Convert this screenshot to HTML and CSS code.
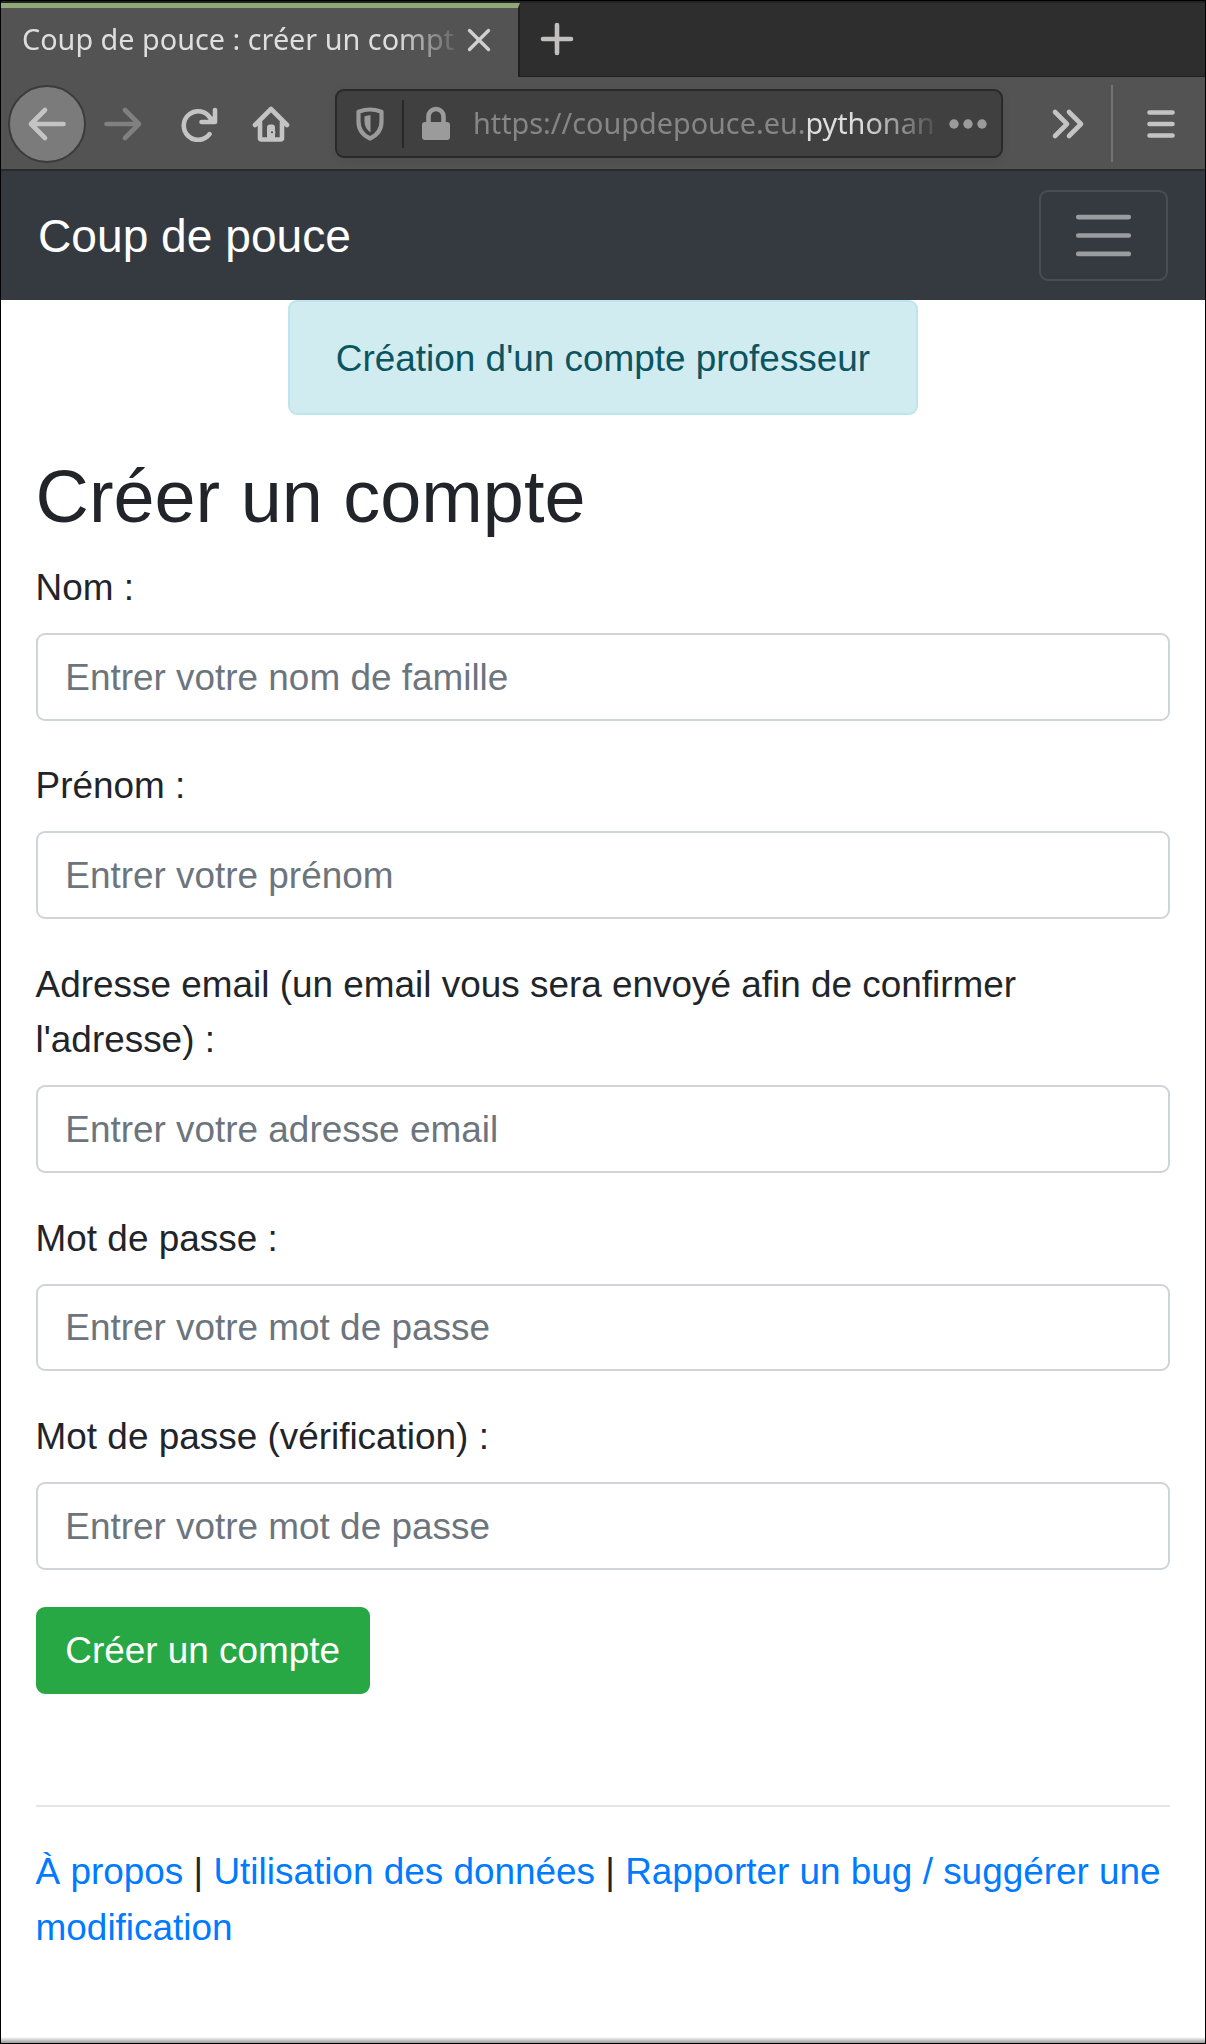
FILE: index.html
```html
<!DOCTYPE html>
<html lang="fr">
<head>
<meta charset="utf-8">
<title>Coup de pouce : créer un compte</title>
<link rel="stylesheet" href="styles.css">
</head>
<body>
<div class="window">
  <header class="browser">
    <div class="tabs">
      <div class="tab">
        <span class="tab-title">Coup de pouce : créer un compt</span>
        <svg class="tab-close" width="24" height="24" viewBox="0 0 24 24"><path d="M2.500 2.500l19 19M21.500 2.500l-19 19"/></svg>
      </div>
      <svg class="tab-add" width="34" height="34" viewBox="0 0 34 34"><path d="M17 3v28M3 17h28"/></svg>
    </div>
    <div class="toolbar">
      <div class="back"><svg width="40" height="36" viewBox="0 0 40 36"><path d="M36.500 18H4M18 4L4 18l14 14"/></svg></div>
      <svg class="icon forward" width="40" height="36" viewBox="0 0 40 36"><path d="M3.500 18H36M22 4l14 14-14 14"/></svg>
      <svg class="icon reload" width="38" height="36" viewBox="0 0 38 36"><path d="M29.500 28.200A14.300 14.300 0 1 1 30.500 12.500"/><path d="M35 4v12H21.500"/><path class="fill" d="M27 16l8-8v8z"/></svg>
      <svg class="icon home" width="38" height="38" viewBox="0 0 38 38"><path d="M3 20L19 4l16 16M8 17v16q0 1.500 1.500 1.500h19q1.500 0 1.500-1.500V17"/><path class="fill" d="M15 34V22.500q0-3 3-3h2q3 0 3 3V34z"/><circle cx="20" cy="27.300" r="1.100" fill="#444"/></svg>
      <div class="address">
        <svg class="shield" width="30" height="36" viewBox="0 0 30 36"><path d="M15 3.500C11.500 3.500 7 4.500 3.500 5.700v9.800c0 9 5 14 11.500 17 6.500-3 11.500-8 11.500-17V5.700C23 4.500 18.500 3.500 15 3.500z"/><path class="fill" d="M15.500 9v17.500C11.500 24 9.500 20 9.500 15.500v-5.300z"/></svg>
        <span class="divider"></span>
        <svg class="lock" width="30" height="36" viewBox="0 0 30 36"><path d="M7.500 17v-6.500a7.500 7.500 0 0 1 15 0V17"/><rect x="1" y="16" width="28" height="18" rx="3"/></svg>
        <span class="url">https://coupdepouce.eu.<b>pythonan</b></span>
        <svg class="dots" width="38" height="10" viewBox="0 0 38 10"><circle cx="5" cy="5" r="4.700"/><circle cx="19" cy="5" r="4.700"/><circle cx="33" cy="5" r="4.700"/></svg>
      </div>
      <svg class="icon more" width="34" height="32" viewBox="0 0 34 32"><path d="M4 4l12 12L4 28M18 4l12 12-12 12"/></svg>
      <span class="separator"></span>
      <svg class="icon menu" width="30" height="30" viewBox="0 0 30 30"><path d="M3.500 3.500h23M3.500 15h23M3.500 26.500h23"/></svg>
    </div>
  </header>
  <nav class="navbar">
    <a class="brand">Coup de pouce</a>
    <button class="toggler" type="button"><svg viewBox="0 0 30 30"><path d="M4 7h22M4 15h22M4 23h22"/></svg></button>
  </nav>
  <main class="container">
    <div class="alert">Création d'un compte professeur</div>
    <h1>Créer un compte</h1>
    <form>
      <div class="group"><label for="nom">Nom :</label><input id="nom" type="text" placeholder="Entrer votre nom de famille"></div>
      <div class="group"><label for="prenom">Prénom :</label><input id="prenom" type="text" placeholder="Entrer votre prénom"></div>
      <div class="group"><label for="email">Adresse email (un email vous sera envoyé afin de confirmer l'adresse) :</label><input id="email" type="email" placeholder="Entrer votre adresse email"></div>
      <div class="group"><label for="mdp">Mot de passe :</label><input id="mdp" type="password" placeholder="Entrer votre mot de passe"></div>
      <div class="group"><label for="mdp2">Mot de passe (vérification) :</label><input id="mdp2" type="password" placeholder="Entrer votre mot de passe"></div>
      <button class="submit" type="button">Créer un compte</button>
    </form>
    <footer><a>À propos</a> | <a>Utilisation des données</a> | <a>Rapporter un bug / suggérer une modification</a></footer>
  </main>
</div>
</body>
</html>
```
FILE: styles.css
```css
* { box-sizing: border-box; }
html { font-size: 36.923px; }
body { margin: 0; font-family: "Liberation Sans", Arial, sans-serif; line-height: 1.5; color: #212529; background: #fff; }
svg { display: block; flex: none; }
.window { display: flex; flex-direction: column; height: 2044px; border: 1px solid #000; background: linear-gradient(#fff, #999) bottom / 100% 6px no-repeat #fff; overflow: hidden; }

.browser { height: 170px; flex: none; background: #535353; border-bottom: 2px solid #2a2a2a; font-family: "Noto Sans", sans-serif; }
.tabs { display: flex; height: 76px; background: #2e2e2e; border-top: 2px solid #232323; box-shadow: inset 0 -1px #202020; }
.tab { display: flex; align-items: center; width: 519px; height: 74px; padding: 0 27px 0 21px; background: #535353; border-top: 5px solid #8fa876; border-right: 2px solid #202020; }
.tab-title { width: 433px; margin-top: -7px; font-size: 28.8px; line-height: 40px; white-space: nowrap; overflow: hidden; color: #dedede; -webkit-mask-image: linear-gradient(90deg, #000 375px, transparent 442px); mask-image: linear-gradient(90deg, #000 375px, transparent 442px); }
.tab-close { margin: -5px 0 0 12px; fill: none; stroke: #d0d0d0; stroke-width: 3.4; stroke-linecap: round; }
.tab-add { margin: 18.500px 0 0 20px; fill: none; stroke: #c4bfbf; stroke-width: 4.6; stroke-linecap: round; }

.toolbar { display: flex; align-items: center; height: 92px; padding: 1px 0 0 7px; }
.toolbar svg { fill: none; stroke: #c4c4c4; stroke-width: 4.6; stroke-linecap: round; stroke-linejoin: round; }
.toolbar .fill { fill: #c4c4c4; stroke: none; }
.back { display: flex; align-items: center; justify-content: center; width: 78px; height: 78px; border: 2px solid #3b3b3b; border-radius: 50%; background: #7b7b7b; }
.toolbar .forward { margin-left: 17px; stroke: #808080; }
.reload { margin-left: 36.500px; }
.home { margin-left: 34.500px; }
.address { display: flex; align-items: center; width: 668px; height: 69px; margin-left: 45px; padding-left: 18px; border: 2px solid #292929; border-radius: 9px; background: #404040; box-shadow: 0 2px 8px rgba(0,0,0,.08); }
.address svg { stroke: #9b9b9b; }
.address .shield { stroke-width: 4.2; }
.address .shield .fill { fill: #9b9b9b; stroke: none; }
.divider { width: 2px; height: 48px; margin: 0 17px; background: #272727; }
.address .lock rect { fill: #9b9b9b; stroke: none; }
.url { width: 462px; margin: -2px 0 0 22px; font-size: 28.8px; line-height: 42px; white-space: nowrap; overflow: hidden; color: #868686; -webkit-mask-image: linear-gradient(90deg, #000 390px, transparent 470px); mask-image: linear-gradient(90deg, #000 390px, transparent 470px); }
.url b { font-weight: 400; color: #dedede; }
.address .dots { margin-left: 14px; fill: #9b9b9b; stroke: none; }
.more { margin-left: 47.500px; }
.separator { width: 2px; height: 77px; margin-left: 26.500px; background: #737373; }
.menu { margin-left: 33px; }

.navbar { display: flex; align-items: center; justify-content: space-between; height: 129px; flex: none; padding: 0 37px; background: #343a40; }
.brand { padding-top: 2px; font-size: 1.25rem; color: #fff; }
.toggler { display: flex; align-items: center; justify-content: center; width: 129px; height: 91px; padding: 0; border: 2px solid rgba(255,255,255,.1); border-radius: 9px; background: none; }
.toggler svg { width: 69px; height: 69px; fill: none; stroke: rgba(255,255,255,.5); stroke-width: 2; stroke-linecap: round; }

.container { padding: 0 34.600px; }
.alert { width: fit-content; margin: 0 auto 1rem; padding: calc(.75rem + 1px) 1.25rem calc(.75rem - .5px); border: 2px solid #bee5eb; border-radius: 9px; background: #d1ecf1; color: #0c5460; }
h1 { margin: 0 0 calc(.5rem - .7px); padding-top: .7px; font-size: 2rem; font-weight: 400; line-height: 1.2; }
.group { margin-bottom: 1rem; }
label { display: block; margin-bottom: calc(.5rem - .6px); padding-top: .6px; }
input { display: block; width: 100%; height: 87.7px; padding: calc(.375rem + 1.5px) .75rem .375rem; border: 2px solid #ced4da; border-radius: 9px; background: #fff; font: inherit; }
input::placeholder { color: #6c757d; opacity: 1; }
.submit { display: block; padding: .375rem .75rem; border: 2px solid #28a745; border-radius: 9px; background: #28a745; color: #fff; font: inherit; }
footer { margin-top: 3rem; padding-top: calc(1rem + .6px); border-top: 2px solid #e5e5e5; }
footer a { color: #007bff; }
```
